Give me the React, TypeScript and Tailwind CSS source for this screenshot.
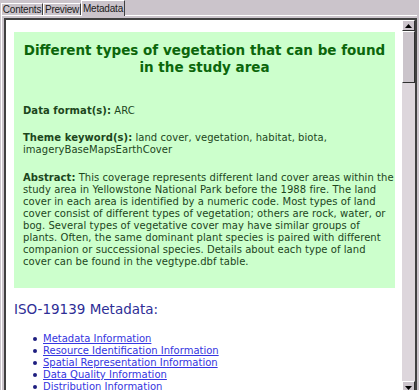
const links = [
  "Metadata Information",
  "Resource Identification Information",
  "Spatial Representation Information",
  "Data Quality Information",
  "Distribution Information",
];

const abstractLines = [
  "within the",
  "study area in Yellowstone National Park before the 1988 fire. The land",
  "cover in each area is identified by a numeric code. Most types of land",
  "cover consist of different types of vegetation; others are rock, water, or",
  "bog. Several types of vegetative cover may have similar groups of",
  "plants. Often, the same dominant plant species is paired with different",
  "companion or successional species. Details about each type of land",
  "cover can be found in the vegtype.dbf table.",
];

const Tab = ({ label, active }: { label: string; active?: boolean }) => (
  <div
    className={
      active
        ? "relative z-10 -mb-[1px] flex h-[16px] w-[44px] items-center justify-center border-l border-t border-white border-r border-r-[#404040] bg-[#cbc4cb] pb-[1px] text-[10px] tracking-[-0.2px] text-[#202020]"
        : "flex h-[12px] items-center justify-center border-l border-t border-white border-r border-r-[#404040] bg-[#cbc4cb] text-[10px] tracking-[-0.2px] text-[#202020]"
    }
  >
    {label}
  </div>
);

const Raised = ({ className, children }: { className: string; children?: React.ReactNode }) => (
  <div
    className={`border-l border-t border-white border-r border-b border-r-[#303030] border-b-[#303030] bg-[#cbc4cb] ${className}`}
  >
    {children}
  </div>
);

export default function App() {
  return (
    <div
      className="relative h-[390px] w-[419px] overflow-hidden bg-[#cbc4cb]"
      style={{ fontFamily: '"DejaVu Sans", Verdana, sans-serif' }}
    >
      <div
        className="flex h-[15px] items-end pl-[1px]"
        style={{ fontFamily: '"Liberation Sans", Arial, sans-serif' }}
      >
        <div className="w-[42px]">
          <Tab label="Contents" />
        </div>
        <div className="w-[38px]">
          <Tab label="Preview" />
        </div>
        <Tab label="Metadata" active />
      </div>

      <div className="ml-[1px] mr-[2px] h-[385px] border-l border-t border-white pl-[2px] pt-[2px]">
        <div className="flex h-full border-l-2 border-t-2 border-r-2 border-[#404040]">
          <div className="flex-1 overflow-hidden bg-white pl-[8px] pr-[7px] pt-[12px]">
            <div className="bg-[#ccffcc] pb-[20px] pl-[9px] pr-[4px] pt-[10px] text-[10px] leading-[12px] tracking-[0.05px] text-[#1c461c]">
              <h1 className="pr-[5px] text-center text-[13.5px] font-bold leading-[17px] tracking-normal text-[#0b660b]">
                Different types of vegetation that can be found in the study area
              </h1>
              <p className="mt-[29px]">
                <span className="font-bold">Data format(s):</span> ARC
              </p>
              <p className="mt-[15px]">
                <span className="font-bold">Theme keyword(s):</span> land cover, vegetation, habitat, biota,
                imageryBaseMapsEarthCover
              </p>
              <p className="mt-[16px] whitespace-nowrap">
                <span className="font-bold">Abstract:</span> This coverage represents different land cover areas{" "}
                {abstractLines.map((line, i) => (
                  <span key={i}>
                    {line}
                    {i < abstractLines.length - 1 ? <br /> : null}
                  </span>
                ))}
              </p>
            </div>
            <h2 className="mt-[12px] text-[13.5px] leading-[18px] text-[#2e2e96]">ISO-19139 Metadata:</h2>
            <ul className="mt-[15px] pl-[19px] text-[10px] leading-[12px]">
              {links.map((l) => (
                <li key={l} className="flex items-center">
                  <span className="mr-[6px] h-[4px] w-[4px] rounded-full bg-[#1e1e80]" />
                  <a className="text-[#3535e0] underline">{l}</a>
                </li>
              ))}
            </ul>
          </div>
          <div className="flex w-[13px] flex-col bg-[#ddd6dc]">
            <Raised className="flex h-[11px] items-center justify-center">
              <svg width="7" height="4" viewBox="0 0 7 4">
                <path d="M3.5 0 L7 4 L0 4 Z" fill="#000" />
              </svg>
            </Raised>
            <Raised className="h-[52px]" />
            <div className="flex-1" />
            <Raised className="mb-[6px] flex h-[13px] items-center justify-center">
              <svg width="7" height="4" viewBox="0 0 7 4">
                <path d="M0 0 L7 0 L3.5 4 Z" fill="#000" />
              </svg>
            </Raised>
          </div>
        </div>
      </div>
    </div>
  );
}
